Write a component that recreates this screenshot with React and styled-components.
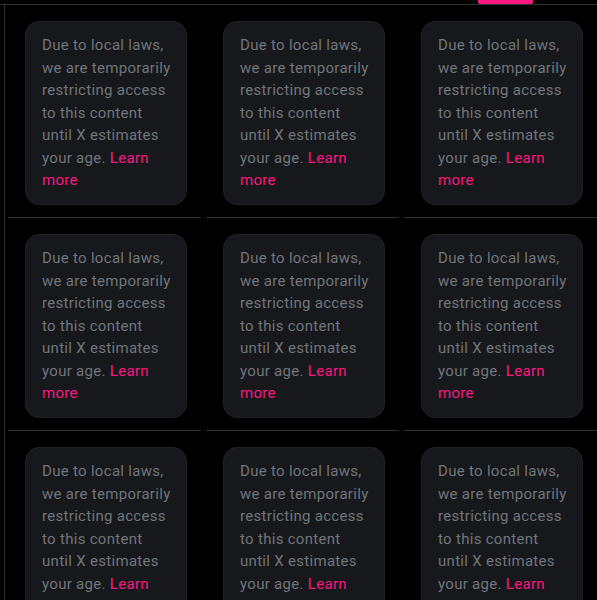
import React from 'react';
import styled, { createGlobalStyle } from 'styled-components';

const GlobalStyle = createGlobalStyle`
  html, body {
    margin: 0;
    padding: 0;
    background: #000;
    overflow: hidden;
  }
`;

const Page = styled.div`
  width: 597px;
  height: 600px;
  overflow: hidden;
  background: #000;
  font-family: Roboto, "Noto Sans", sans-serif;
`;

const TabBar = styled.div`
  display: flex;
  justify-content: flex-end;
  height: 4px;
  padding-right: 64px;
  border-bottom: 1px solid #2f3336;
`;

const Indicator = styled.div`
  width: 55px;
  height: 4px;
  border-radius: 0 0 2px 2px;
  background: #f91880;
`;

const Body = styled.div`
  margin-left: 4px;
  padding-left: 3px;
  border-left: 1px solid #2f3336;
`;

const Grid = styled.div`
  display: grid;
  grid-template-columns: repeat(3, 1fr);
  column-gap: 5px;
`;

const Cell = styled.div`
  padding: 16px 14px 12px 17px;
  border-bottom: 1px solid #2f3336;
`;

const Card = styled.div`
  height: 184px;
  box-sizing: border-box;
  padding: 12px 12px 13px 16px;
  background: #16181c;
  border: 1px solid #1f2226;
  border-radius: 14px;
  color: #71767b;
  font-size: 15px;
  line-height: 22.5px;
  letter-spacing: 0.3px;
  overflow: hidden;
`;

const Link = styled.a`
  color: #f91880;
  text-decoration: none;
`;

const items = Array.from({ length: 9 }, (_, i) => i);

export default function App() {
  return (
    <Page>
      <GlobalStyle />
      <TabBar>
        <Indicator />
      </TabBar>
      <Body>
        <Grid>
          {items.map((i) => (
            <Cell key={i}>
              <Card>
                Due to local laws, we are temporarily restricting access to this content until X estimates your age.{' '}
                <Link href="#">Learn more</Link>
              </Card>
            </Cell>
          ))}
        </Grid>
      </Body>
    </Page>
  );
}
